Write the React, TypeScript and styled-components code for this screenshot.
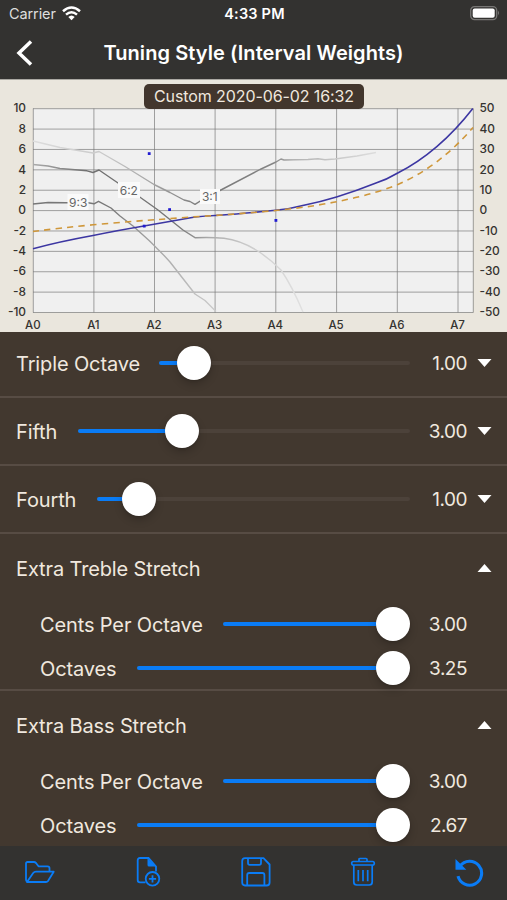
import React from "react";
import styled, { createGlobalStyle } from "styled-components";

const GlobalStyle = createGlobalStyle`
  *, *::before, *::after { box-sizing: border-box; }
  html, body { margin: 0; padding: 0; background: #333230; }
  body { font-family: Inter, "Liberation Sans", sans-serif; }
`;

const Screen = styled.div`
  width: 507px;
  height: 900px;
  display: flex;
  flex-direction: column;
  overflow: hidden;
  background: #42382f;
  color: #f0e8df;
`;

const StatusBar = styled.div`
  height: 28px;
  flex: none;
  display: grid;
  grid-template-columns: 1fr auto 1fr;
  align-items: center;
  padding: 0 7px 2px 9px;
  background: #333230;
  color: #fff;
`;

const Carrier = styled.div`
  display: flex;
  align-items: center;
  gap: 6px;
  font-size: 14.5px;
  letter-spacing: -0.1px;
  color: #dededd;
`;

const Clock = styled.div`
  font-size: 14.5px;
  font-weight: 600;
  letter-spacing: 0.2px;
`;

const Battery = styled.div`
  display: flex;
  justify-content: flex-end;
`;

const NavBar = styled.header`
  height: 51px;
  flex: none;
  display: grid;
  grid-template-columns: 48px 1fr 48px;
  align-items: center;
  padding-bottom: 2px;
  background: #333230;
`;

const BackButton = styled.button`
  display: flex;
  padding: 0 0 0 15px;
  border: 0;
  background: none;
`;

const Title = styled.h1`
  margin: 0;
  text-align: center;
  white-space: nowrap;
  font-size: 20px;
  font-weight: 600;
  letter-spacing: 0.07px;
  color: #fff;
`;

const ChartPanel = styled.section`
  position: relative;
  height: 253px;
  flex: none;
  background: #eae6dd;
`;

const ChartBadge = styled.div`
  position: absolute;
  top: 5px;
  left: 144px;
  width: 220px;
  height: 25px;
  border-radius: 5px;
  background: #42362d;
  color: #f0e8df;
  font-size: 16px;
  line-height: 25px;
  letter-spacing: -0.1px;
  text-align: center;
  white-space: nowrap;
`;

const ChartSvg = styled.svg`
  display: block;
  font-family: Inter, "Liberation Sans", sans-serif;
`;

const List = styled.main`
  height: 514px;
  flex: none;
  overflow: hidden;
`;

const Row = styled.div<{ $first?: boolean }>`
  height: ${(p) => (p.$first ? 66 : 68)}px;
  padding: ${(p) => (p.$first ? "0 15px 2px 16px" : "0 15px 0 16px")};
  border-bottom: 2px solid #574c44;
  display: flex;
  align-items: center;
`;

const Group = styled.section`
  height: 157px;
  border-bottom: 2px solid #574c44;
`;

const GroupHead = styled.div`
  height: 68px;
  padding: 0 15px 0 16px;
  display: flex;
  align-items: center;
  justify-content: space-between;
`;

const SubRow = styled.div`
  height: 44px;
  padding: 0 15px 0 40px;
  display: flex;
  align-items: center;
`;

const Label = styled.span<{ $width?: number }>`
  flex: none;
  width: ${(p) => (p.$width ? `${p.$width}px` : "auto")};
  padding-top: 1px;
  font-size: 20px;
  line-height: 24px;
  letter-spacing: -0.13px;
  white-space: nowrap;
`;

const Value = styled.span`
  width: 58px;
  flex: none;
  padding: 1px 1px 0 0;
  text-align: right;
  font-size: 19px;
  line-height: 24px;
  letter-spacing: -0.5px;
`;

const CaretSlot = styled.span`
  width: 24px;
  height: 10px;
  flex: none;
  display: flex;
  justify-content: flex-end;
`;

const Track = styled.div`
  position: relative;
  flex: 1;
  height: 4px;
  border-radius: 2px;
  background: #4c423a;
`;

const Fill = styled.div`
  height: 4px;
  border-radius: 2px;
  background: #0a7cf6;
`;

const Thumb = styled.div`
  position: absolute;
  top: -15px;
  width: 34px;
  height: 34px;
  margin-left: -17px;
  border-radius: 50%;
  background: #fff;
  box-shadow: 0 4px 8px rgba(0, 0, 0, 0.2), 0 1px 2px rgba(0, 0, 0, 0.12);
`;

const Toolbar = styled.nav`
  height: 54px;
  flex: none;
  display: flex;
  align-items: center;
  justify-content: space-between;
  padding: 0 17px 2px 21px;
  background: #333230;
`;

const ToolButton = styled.button<{ $inset?: number }>`
  width: 38px;
  height: 36px;
  padding: 0 ${(p) => p.$inset ?? 0}px 0 0;
  border: 0;
  background: none;
  color: #0a7cf6;
  display: flex;
  align-items: center;
  justify-content: center;
`;

function Caret({ up = false }: { up?: boolean }) {
  return (
    <CaretSlot>
      <svg width="15" height="10" viewBox="0 0 15 10">
        <path d={up ? "M0.5 9 L7.5 1 L14.5 9 Z" : "M0.5 1 L14.5 1 L7.5 9 Z"} fill="#fff" />
      </svg>
    </CaretSlot>
  );
}

function Slider({ percent }: { percent: number }) {
  return (
    <Track>
      <Fill style={{ width: `${percent}%` }} />
      <Thumb style={{ left: `${percent}%` }} />
    </Track>
  );
}

const sliders = [
  { label: "Triple Octave", width: 143, percent: 14.1, value: "1.00" },
  { label: "Fifth", width: 62, percent: 31.2, value: "3.00" },
  { label: "Fourth", width: 81, percent: 13.4, value: "1.00" },
];

const groups = [
  { title: "Extra Treble Stretch", cents: "3.00", octaves: "3.25" },
  { title: "Extra Bass Stretch", cents: "3.00", octaves: "2.67" },
];

const columns = [33.3, 93.9, 154.5, 215.1, 275.8, 336.6, 397.3, 458];
const leftScale = [10, 8, 6, 4, 2, 0, -2, -4, -6, -8, -10];
const rowY = (i: number) => 108.7 + i * 20.38;

function Chart() {
  return (
    <ChartSvg width="507" height="253" viewBox="0 79 507 253">
      <defs>
        <linearGradient id="upper" gradientUnits="userSpaceOnUse" x1="33" y1="0" x2="376" y2="0">
          <stop offset="0" stopColor="#ddd" />
          <stop offset="0.22" stopColor="#c8c8c8" />
          <stop offset="0.38" stopColor="#9a9a9a" />
          <stop offset="0.5" stopColor="#777" />
          <stop offset="0.7" stopColor="#858585" />
          <stop offset="0.76" stopColor="#b2b2b2" />
          <stop offset="1" stopColor="#ddd" />
        </linearGradient>
        <linearGradient id="middle" gradientUnits="userSpaceOnUse" x1="33" y1="0" x2="303" y2="0">
          <stop offset="0" stopColor="#aaa" />
          <stop offset="0.2" stopColor="#707070" />
          <stop offset="0.54" stopColor="#777" />
          <stop offset="0.65" stopColor="#aaa" />
          <stop offset="0.8" stopColor="#ccc" />
          <stop offset="1" stopColor="#e0e0e0" />
        </linearGradient>
        <linearGradient id="lower" gradientUnits="userSpaceOnUse" x1="33" y1="0" x2="217" y2="0">
          <stop offset="0" stopColor="#777" />
          <stop offset="0.42" stopColor="#777" />
          <stop offset="0.65" stopColor="#a5a5a5" />
          <stop offset="1" stopColor="#ccc" />
        </linearGradient>
      </defs>
      <path d="M0 79.5 H507" stroke="#aaa8a2" />
      <rect x="33" y="108.5" width="440" height="204" fill="#f0f0f0" />
      <g stroke="#777" strokeOpacity="0.68" strokeWidth="1">
        {leftScale.map((v, i) => (
          <path key={v} d={`M33 ${rowY(i)} H473.3`} />
        ))}
        {[...columns, 473.3].map((x) => (
          <path key={x} d={`M${x} 108.5 V312.5`} />
        ))}
      </g>
      <g fill="none" strokeWidth="1.4" strokeLinejoin="round">
        <path stroke="url(#upper)" d="M33 141 L60 147.5 L93 153 L99 151.5 L125 166.5 L154 184.5 L170 192.5 L184 200 L190 201.5 L195 204.3 L205 198 L219 191 L260 169.5 L276 162 L281 159 L284 160 L308 159.5 L318 158.8 L325 159.7 L335 159 L357 156 L376 152.5" />
        <path stroke="url(#middle)" d="M33 164.5 L48 166 L60 168.5 L87 170.8 L93 172.5 L99 170 L118 183 L139 196.5 L158 210 L168 218 L183 230 L195 237.7 Q212 237 224 238.3 C246 241 266 255 281 270 Q292 286 303 312" />
        <path stroke="url(#lower)" d="M33 204 L48 202.5 L66 202.8 L88 202.8 L94 203.8 L98.5 201.3 L111 208 L120 216 L133 226 Q154 244 170 262 L195 294 L205 300.5 L216 311.5" />
        <path stroke="#3c36a2" strokeWidth="1.6" d="M33 248.7 Q60 241.5 93 235.5 Q120 230 144 226 Q170 221.5 195 217 Q205 216 215 215.5 Q250 213 275.5 210.3 Q290 209 305 205 Q320 202 336.5 197 Q356 191 376 183 Q387 179.5 397.3 173.3 Q439 152 472.8 108.5" />
        <path stroke="#cf973a" strokeWidth="1.6" strokeDasharray="6.3 5.2" d="M33 231.5 Q60 228 93 224.8 Q130 221.5 165 219 Q190 217 215 215.5 Q250 213 275.5 210.5 Q290 209 305 207 Q331 203.5 358 197 Q379 192 397.3 184.7 Q439 167 473 127.5" />
      </g>
      <g fill="#211bd1">
        <rect x="147.8" y="152.2" width="2.8" height="2.8" />
        <rect x="168.2" y="208.2" width="2.8" height="2.8" />
        <rect x="142.8" y="224.7" width="2.8" height="2.8" />
        <rect x="274.5" y="219" width="2.8" height="2.8" />
      </g>
      <g fill="#fafafa">
        <rect x="67.5" y="194" width="21" height="16" />
        <rect x="118" y="182" width="22" height="16" />
        <rect x="200" y="189" width="20" height="15" />
      </g>
      <g fill="#666" fontSize="12" textAnchor="middle">
        <text x="78.2" y="207">9:3</text>
        <text x="128.8" y="194.6">6:2</text>
        <text x="209.8" y="201">3:1</text>
      </g>
      <g fill="#353330" fontSize="11.9" fontWeight="500">
        {leftScale.map((v, i) => (
          <React.Fragment key={v}>
            <text x="26" y={rowY(i) + 3.7} textAnchor="end">{v}</text>
            <text x="479.5" y={rowY(i) + 3.7}>{v * 5}</text>
          </React.Fragment>
        ))}
        {columns.map((x, i) => (
          <text key={x} x={x - 0.5} y="329.2" textAnchor="middle" fontSize="11.5">{`A${i}`}</text>
        ))}
      </g>
    </ChartSvg>
  );
}

export default function App() {
  return (
    <>
      <GlobalStyle />
      <Screen>
        <StatusBar>
          <Carrier>
            Carrier
            <svg width="19" height="15" viewBox="0 0 19 15" fill="none" stroke="#fff" strokeWidth="2.5">
              <path d="M1 5.3 Q9.5 -2.2 18 5.3" />
              <path d="M4 8.6 Q9.5 3.8 15 8.6" />
              <path d="M6.3 11 Q9.5 8 12.7 11 L9.5 14.2 Z" fill="#fff" stroke="none" />
            </svg>
          </Carrier>
          <Clock>4:33 PM</Clock>
          <Battery>
            <svg width="31" height="16" viewBox="0 0 31 16">
              <rect x="1.7" y="1.6" width="26" height="13" rx="3.8" fill="none" stroke="#777674" strokeWidth="1.3" />
              <rect x="3.7" y="3.5" width="22" height="9.2" rx="2" fill="#fff" />
              <path d="M29 5.8 Q31 8 29 10.2 Z" fill="#777674" />
            </svg>
          </Battery>
        </StatusBar>
        <NavBar>
          <BackButton aria-label="Back">
            <svg width="19" height="28" viewBox="0 0 19 28" fill="none" stroke="#fff" strokeWidth="3.5">
              <path d="M16 2.5 L4 14 L16 25.5" />
            </svg>
          </BackButton>
          <Title>Tuning Style (Interval Weights)</Title>
        </NavBar>
        <ChartPanel>
          <Chart />
          <ChartBadge>Custom 2020-06-02 16:32</ChartBadge>
        </ChartPanel>
        <List>
          {sliders.map((s, i) => (
            <Row key={s.label} $first={i === 0}>
              <Label $width={s.width}>{s.label}</Label>
              <Slider percent={s.percent} />
              <Value>{s.value}</Value>
              <Caret />
            </Row>
          ))}
          {groups.map((g) => (
            <Group key={g.title}>
              <GroupHead>
                <Label>{g.title}</Label>
                <Caret up />
              </GroupHead>
              <SubRow>
                <Label $width={183}>Cents Per Octave</Label>
                <Slider percent={90.7} />
                <Value>{g.cents}</Value>
                <CaretSlot />
              </SubRow>
              <SubRow>
                <Label $width={97}>Octaves</Label>
                <Slider percent={93.7} />
                <Value>{g.octaves}</Value>
                <CaretSlot />
              </SubRow>
            </Group>
          ))}
        </List>
        <Toolbar>
          <ToolButton aria-label="Open">
            <svg width="32" height="26" viewBox="0 0 32 26" fill="none" stroke="currentColor" strokeWidth="1.8" strokeLinejoin="round">
              <path d="M3 22.5 Q2 22 2 20.5 V4.5 Q2 3 3.5 3 H10 Q11 3 12 4 L14.5 7.3 H23.5 Q25.5 7.3 25.5 9.2 V12.5" />
              <path d="M3 23 L9.2 14 Q10.2 12.7 12 12.7 H29.7 L24 22 Q23.3 23 22 23 Z" />
            </svg>
          </ToolButton>
          <ToolButton aria-label="New">
            <svg width="26" height="32" viewBox="0 0 26 32" fill="none" stroke="currentColor" strokeWidth="1.8">
              <path d="M10.5 26.3 H5 Q2.7 26.3 2.7 24 V4.3 Q2.7 2 5 2 H13.5 L21 10.5 V15.5" />
              <path d="M12.5 2 V9 Q12.5 10.5 14 10.5 H21 Z" fill="currentColor" stroke="none" />
              <circle cx="17.5" cy="22.8" r="6.8" />
              <path d="M17.5 19.2 V26.4 M13.9 22.8 H21.1" />
            </svg>
          </ToolButton>
          <ToolButton aria-label="Save">
            <svg width="32" height="32" viewBox="0 0 32 32" fill="none" stroke="currentColor" strokeWidth="1.8" strokeLinejoin="round">
              <path d="M5 2.2 H23.5 L29.6 8.5 V26.5 Q29.6 29.5 26.6 29.5 H5 Q2.2 29.5 2.2 26.5 V5 Q2.2 2.2 5 2.2 Z" />
              <path d="M8 2.5 V7 Q8 8.8 9.8 8.8 H19.2 Q21 8.8 21 7 V2.5" />
              <path d="M7.2 29.3 V19 Q7.2 17 9.2 17 H22.4 Q24.4 17 24.4 19 V29.3" />
            </svg>
          </ToolButton>
          <ToolButton aria-label="Delete">
            <svg width="26" height="32" viewBox="0 0 26 32" fill="none" stroke="currentColor" strokeWidth="1.7" strokeLinejoin="round">
              <path d="M9 5.3 V3.4 Q9 2.5 10 2.5 H16 Q17 2.5 17 3.4 V5.3" />
              <path d="M3.3 5.5 H22.7 Q24.3 5.5 24.3 7.3 Q24.3 9 22.7 9 H3.3 Q1.7 9 1.7 7.3 Q1.7 5.5 3.3 5.5 Z" />
              <path d="M3.8 9 V26 Q3.8 29 6.8 29 H19.2 Q22.2 29 22.2 26 V9 M8.3 14 V25.3 M13 14 V25.3 M17.7 14 V25.3" />
            </svg>
          </ToolButton>
          <ToolButton aria-label="Reset" $inset={4}>
            <svg width="30" height="30" viewBox="0 0 30 30" fill="none" stroke="currentColor" strokeWidth="3.1">
              <path d="M6 9 A12 12 0 1 1 4 19.2" />
              <path d="M1.5 2 L12.3 12.8 H1.5 Z" fill="currentColor" stroke="none" />
            </svg>
          </ToolButton>
        </Toolbar>
      </Screen>
    </>
  );
}
